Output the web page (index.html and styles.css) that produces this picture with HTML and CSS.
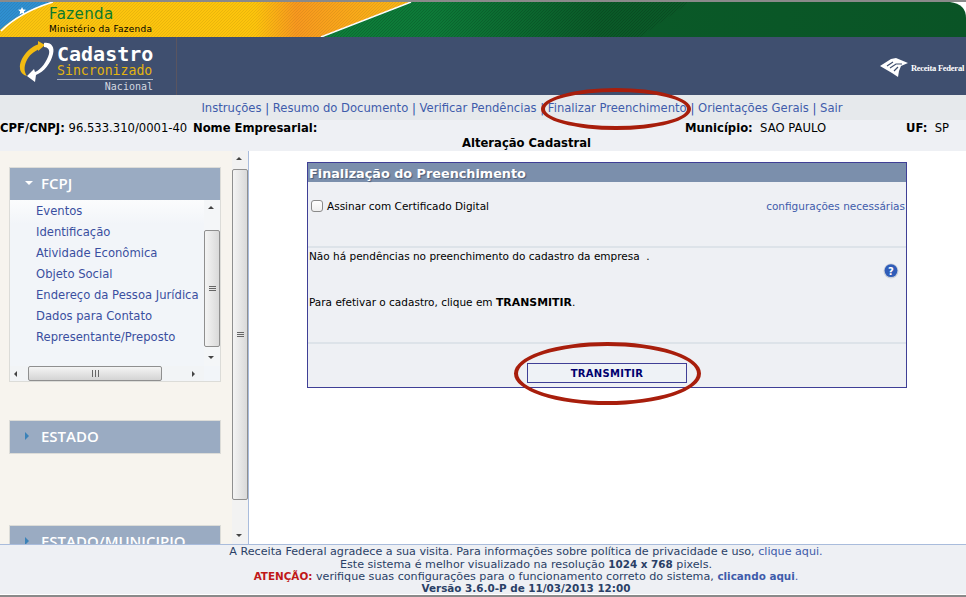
FILE: index.html
```html
<!DOCTYPE html>
<html>
<head>
<title>Cadastro Sincronizado Nacional</title>
<meta charset="utf-8">
<link rel="stylesheet" href="styles.css">
</head>
<body>
<div class="page">

<header class="banner">
  <svg class="banner-art" width="966" height="35" viewBox="0 0 966 35">
    <defs>
      <linearGradient id="yel" x1="0" x2="1" y1="0" y2="0">
        <stop offset="0" stop-color="#fbc40f"/>
        <stop offset=".62" stop-color="#fdc40c"/>
        <stop offset=".72" stop-color="#f7981f"/>
        <stop offset=".85" stop-color="#f9a81a"/>
        <stop offset="1" stop-color="#f8b516"/>
      </linearGradient>
      <linearGradient id="grn" x1="0" x2="1" y1="0" y2="0">
        <stop offset="0" stop-color="#0f8a3e"/>
        <stop offset=".45" stop-color="#0d7a38"/>
        <stop offset=".62" stop-color="#0a5a28"/>
        <stop offset="1" stop-color="#0a5426"/>
      </linearGradient>
      <pattern id="weave" width="3" height="3" patternUnits="userSpaceOnUse">
        <path d="M0 3L3 0" stroke="#000" stroke-opacity=".14"/>
      </pattern>
    </defs>
    <path d="M0 0H950Q966 2 966 16V35H0Z" fill="url(#grn)"/>
    <path d="M300 0H690L640 35H300Z" fill="url(#weave)"/>
    <path d="M0 0H411L321 35H0Z" fill="url(#yel)"/>
    <path d="M411 0L321 35" stroke="#fff" stroke-width="1.5"/>
    <path d="M0 0H52Q20 10 0 28Z" fill="#2f8fd0"/>
    <path d="M0 0H411L321 35H0Z" fill="url(#weave)" opacity=".5"/>
    <path d="M53 0Q20 10 1 29" stroke="#fff" stroke-width="1.5" fill="none"/>
    <path d="M22 5l1.2 2.6 2.8.2-2.1 1.8.7 2.8-2.6-1.5-2.4 1.5.6-2.8-2.1-1.8 2.8-.2z" fill="#fff"/>
  </svg>
  <div class="ministry">
    <div class="ministry-name">Fazenda</div>
    <div class="ministry-sub">Ministério da Fazenda</div>
  </div>
</header>

<div class="brand">
  <div class="brand-left">
    <svg class="swirl" width="40" height="44" viewBox="0 0 40 44">
      <path d="M22 3C12 6 2 18 3 27C3 31 6 34 10 35C7 31 7 26 9 21C12 14 17 10 23 8Z" fill="#f2bb12"/>
      <path d="M21 0L28 4L21 10Z" fill="#f2bb12"/>
      <path d="M27 2C34 1 38 6 36 13C34 22 27 31 19 34L18 41L10 35L17 28L18 31C24 29 30 20 32 13C33 9 31 6 27 6Z" fill="#fff"/>
    </svg>
    <div class="brand-text">
      <div class="brand-title">Cadastro</div>
      <div class="brand-sync">Sincronizado</div>
      <div class="brand-nat">Nacional</div>
    </div>
  </div>
  <div class="receita">
    <svg width="29" height="20" viewBox="0 0 29 20">
      <path d="M0 8L11 1L16 0L28 5L21 8L19 13L18 19L12 15Z" fill="#fff"/>
      <path d="M7 8L13 4M10 10L16 6L22 6M14 13L18 9" stroke="#3f4f6f" stroke-width="1.2" fill="none"/>
    </svg>
    <span>Receita Federal</span>
  </div>
</div>

<nav class="nav">
  <a href="#">Instruções</a> | <a href="#">Resumo do Documento</a> | <a href="#">Verificar Pendências</a> | <a href="#">Finalizar Preenchimento</a> | <a href="#">Orientações Gerais</a> | <a href="#">Sair</a>
</nav>

<section class="info">
  <div class="info-row">
    <div class="info-main"><b>CPF/CNPJ:</b> 96.533.310/0001-40 <b class="gap">Nome Empresarial:</b></div>
    <div class="info-city"><b>Município:</b>&nbsp; SAO PAULO</div>
    <div><b>UF:</b>&nbsp; SP</div>
  </div>
  <div class="info-title">Alteração Cadastral</div>
</section>

<div class="frames">
  <aside class="side">
    <div class="acc-head acc-open"><i class="tri-down"></i>FCPJ</div>
    <div class="acc-body">
      <ul class="acc-list">
        <li><a href="#">Eventos</a></li>
        <li><a href="#">Identificação</a></li>
        <li><a href="#">Atividade Econômica</a></li>
        <li><a href="#">Objeto Social</a></li>
        <li><a href="#">Endereço da Pessoa Jurídica</a></li>
        <li><a href="#">Dados para Contato</a></li>
        <li><a href="#">Representante/Preposto</a></li>
      </ul>
      <div class="sb sb-v sb-inner">
        <i class="arr arr-up"></i>
        <div class="sb-track"><div class="thumb thumb-inner"><em class="grip"></em></div></div>
        <i class="arr arr-down"></i>
      </div>
      <div class="sb-h">
        <i class="arr arr-left"></i>
        <div class="thumb-h"><em class="grip-h"></em></div>
        <i class="arr arr-right"></i>
      </div>
    </div>
    <div class="acc-head acc-two"><i class="tri-right"></i>ESTADO</div>
    <div class="acc-head acc-three"><i class="tri-right"></i>ESTADO/MUNICIPIO</div>
  </aside>

  <div class="sb sb-v sb-outer">
    <i class="arr arr-up"></i>
    <div class="sb-track"><div class="thumb thumb-outer"><em class="grip"></em></div></div>
    <i class="arr arr-down"></i>
  </div>

  <main class="main">
    <div class="panel">
      <h1 class="panel-title">Finalização do Preenchimento</h1>
      <div class="panel-cert">
        <label class="cert"><span class="check"></span>Assinar com Certificado Digital</label>
        <a href="#">configurações necessárias</a>
      </div>
      <div class="panel-msg">
        <p>Não há pendências no preenchimento do cadastro da empresa &nbsp;.</p>
        <svg class="help" width="16" height="16" viewBox="0 0 16 16">
          <circle cx="8" cy="8" r="7.5" fill="#c9cfd8"/>
          <circle cx="8" cy="7.6" r="6.4" fill="#2f5cb8"/>
          <text x="8" y="11.5" text-anchor="middle" class="help-q">?</text>
        </svg>
        <p class="msg-two">Para efetivar o cadastro, clique em <b>TRANSMITIR</b>.</p>
      </div>
      <div class="panel-foot">
        <button class="send">TRANSMITIR</button>
      </div>
    </div>
  </main>
</div>

<footer class="foot">
  <div>A Receita Federal agradece a sua visita. Para informações sobre política de privacidade e uso, <a href="#">clique aqui.</a></div>
  <div>Este sistema é melhor visualizado na resolução <b>1024 x 768</b> pixels.</div>
  <div><b class="warn">ATENÇÃO:</b> verifique suas configurações para o funcionamento correto do sistema, <a href="#"><b>clicando aqui</b>.</a></div>
  <div><b>Versão 3.6.0-P de 11/03/2013 12:00</b></div>
</footer>
<div class="bottom-line"></div>

<div class="ring ring-nav"></div>
<div class="ring ring-send"></div>

</div>
</body>
</html>
```

FILE: styles.css
```css
* {
   box-sizing: border-box;}

body {
   background: #fff;
   color: #000;
   font-family: 'DejaVu Sans', sans-serif;
   font-size: 11px;
   margin: 0;
   overflow: hidden;}

a {
   color: #3150a8;
   text-decoration: none;}

.page {
   border-top: 2px solid #8a8a8a;
   height: 597px;
   overflow: hidden;
   position: relative;
   width: 966px;}

/* top banner */
.banner {
   height: 35px;
   position: relative;}

.banner-art {
   display: block;
   left: 0;
   position: absolute;
   top: 0;}

.ministry {
   padding: 5px 0 0 49px;
   position: relative;}

.ministry-name {
   color: #0a7a2e;
   font-size: 15px;
   letter-spacing: .4px;
   line-height: 15px;}

.ministry-sub {
   font-size: 9px;
   letter-spacing: .25px;
   line-height: 12px;
   padding-top: 1px;}

/* blue bar */
.brand {
   align-items: center;
   background: #3f4f6f;
   display: flex;
   height: 58px;
   justify-content: space-between;}

.brand-left {
   border-right: 1px solid #5a5560;
   display: flex;
   height: 58px;
   padding: 8px 0 0 17px;
   width: 177px;}

.swirl {
   flex: none;
   margin-top: -4px;}

.brand-text {
   font-family: 'DejaVu Sans Mono', monospace;
   width: 96px;}

.brand-title {
   color: #fff;
   font-size: 20px;
   font-weight: bold;
   height: 19px;
   line-height: 19px;}

.brand-sync {
   border-bottom: 1px solid #aab2c2;
   color: #e3b40f;
   font-size: 13.2px;
   height: 16px;
   line-height: 14px;}

.brand-nat {
   color: #d4d8e0;
   font-size: 10px;
   line-height: 13px;
   text-align: right;}

.receita {
   align-items: center;
   color: #fff;
   display: flex;
   font-family: 'Liberation Serif', serif;
   font-size: 8.5px;
   font-weight: bold;
   gap: 2px;
   letter-spacing: -.25px;
   padding: 3px 2px 0 0;
   white-space: nowrap;}

/* nav */
.nav {
   background: #e6e9ec;
   color: #3150a8;
   font-size: 11.6px;
   height: 25px;
   line-height: 27px;
   padding-left: 78px;
   text-align: center;}

.nav a {
   color: #3f5cab;}

/* cadastro info */
.info {
   background: #eef0f4;
   font-size: 11.6px;
   height: 31px;
   line-height: 15px;
   padding-top: 1px;}

.info-row {
   display: flex;
   height: 15px;}

.info-main {
   width: 685px;}

.gap {
   margin-left: 2px;}

.info-city {
   width: 221px;}

.info-title {
   font-weight: bold;
   margin-left: 462px;}

/* frames */
.frames {
   border-bottom: 1px solid #a9bcdc;
   display: flex;
   height: 394px;}

.side {
   background: #f7f4ee;
   flex: none;
   height: 393px;
   overflow: hidden;
   padding: 16px 11px 0 9px;
   width: 232px;}

.acc-head {
   align-items: center;
   background: #9aabc2;
   border: 1px solid #dcdcd8;
   color: #fff;
   display: flex;
   font-family: 'Open Sans', sans-serif;
   font-size: 15px;
   font-weight: 600;
   height: 34px;
   padding: 0 0 2px 15px;}

.acc-open {
   border-bottom: none;
   height: 33px;}

.acc-two {
   margin-top: 38px;}

.acc-three {
   margin-top: 71px;}

.tri-down {
   border-left: 4px solid transparent;
   border-right: 4px solid transparent;
   border-top: 4px solid #fff;
   margin-right: 8px;}

.tri-right {
   border-bottom: 4px solid transparent;
   border-left: 4px solid #3b82b8;
   border-top: 4px solid transparent;
   margin: 0 12px 0 0;}

.acc-body {
   background: linear-gradient(#fbfcfd, #f2f5f9 24px);
   border: 1px solid #dcdcd8;
   border-top: none;
   height: 182px;
   position: relative;
   width: 212px;}

.acc-list {
   font-size: 11.6px;
   list-style: none;
   margin: 0;
   padding: 1px 0 0 26px;}

.acc-list li {
   height: 21px;
   line-height: 21px;
   white-space: nowrap;}

.acc-list a {
   color: #3a4fa0;}

/* scrollbars */
.sb {
   background: #f2f2f2;
   display: flex;
   flex-direction: column;}

.sb-outer {
   border-right: 1px solid #a9bcdc;
   flex: none;
   height: 393px;
   width: 17px;}

.sb-inner {
   background: #f4f6f8;
   height: 166px;
   position: absolute;
   right: 0;
   top: 0;
   width: 16px;}

.sb-track {
   flex: 1;}

.thumb {
   align-items: center;
   background: linear-gradient(90deg, #f4f4f4, #d9d9d9);
   border: 1px solid #8f8f8f;
   border-radius: 2px;
   display: flex;
   justify-content: center;}

.thumb-outer {
   height: 331px;
   margin-top: 2px;}

.thumb-inner {
   height: 117px;
   margin-top: 14px;}

.grip {
   border-bottom: 1px solid #666;
   border-top: 1px solid #666;
   height: 5px;
   position: relative;
   width: 7px;}

.grip:after {
   border-top: 1px solid #666;
   content: '';
   left: 0;
   position: absolute;
   right: 0;
   top: 1px;}

.arr {
   display: block;
   flex: none;
   height: 16px;
   position: relative;
   width: 15px;}

.arr:after {
   content: '';
   left: 4px;
   position: absolute;
   top: 6px;}

.arr-up:after {
   border-bottom: 3px solid #444;
   border-left: 3px solid transparent;
   border-right: 3px solid transparent;}

.arr-down:after {
   border-left: 3px solid transparent;
   border-right: 3px solid transparent;
   border-top: 3px solid #444;}

.arr-left:after {
   border-bottom: 3px solid transparent;
   border-right: 3px solid #444;
   border-top: 3px solid transparent;
   top: 4px;}

.arr-right:after {
   border-bottom: 3px solid transparent;
   border-left: 3px solid #444;
   border-top: 3px solid transparent;
   left: 6px;
   top: 4px;}

.sb-h {
   align-items: center;
   background: #f2f4f6;
   bottom: 0;
   display: flex;
   height: 15px;
   left: 0;
   position: absolute;
   width: 194px;}

.sb-h .arr {
   height: 14px;
   width: 18px;}

.thumb-h {
   align-items: center;
   background: linear-gradient(#f4f4f4, #d4d4d4);
   border: 1px solid #8f8f8f;
   border-radius: 2px;
   display: flex;
   height: 15px;
   justify-content: center;
   margin-right: 24px;
   width: 136px;}

.grip-h {
   border-left: 1px solid #666;
   border-right: 1px solid #666;
   height: 7px;
   position: relative;
   width: 7px;}

.grip-h:after {
   border-left: 1px solid #666;
   content: '';
   height: 7px;
   left: 2px;
   position: absolute;}

/* main panel */
.main {
   flex: 1;
   padding: 11px 0 0 58px;}

.panel {
   background: #eef0f4;
   border: 1px solid #3f3f96;
   font-size: 10.5px;
   height: 226px;
   width: 600px;}

.panel-title {
   background: #7b8fac;
   color: #fff;
   font-size: 12.8px;
   font-weight: bold;
   height: 19px;
   line-height: 21px;
   margin: 0;
   padding-left: 1px;
   text-shadow: 1px 1px 1px #4a5a75;}

.panel-cert {
   align-items: center;
   border-bottom: 2px solid #dde3e9;
   display: flex;
   height: 66px;
   justify-content: space-between;
   padding: 0 1px 16px 3px;}

.panel-cert a {
   color: #3f5cab;}

.cert {
   align-items: center;
   display: flex;}

.check {
   background: linear-gradient(#fff, #f0f0f0);
   border: 1px solid #8a8a8a;
   border-radius: 3px;
   height: 12px;
   margin-right: 4px;
   width: 12px;}

.panel-msg {
   border-bottom: 2px solid #dde3e9;
   height: 96px;
   padding: 1px 0 0 1px;
   position: relative;}

.panel-msg p {
   line-height: 15px;
   margin: 0;}

.panel-msg b {
   font-size: 10.9px;}

.msg-two {
   padding-top: 31px;}

.help {
   position: absolute;
   right: 7px;
   top: 15px;}

.help-q {
   fill: #fff;
   font-family: 'DejaVu Sans', sans-serif;
   font-size: 10px;
   font-weight: bold;}

.panel-foot {
   display: flex;
   justify-content: center;
   padding-top: 19px;}

.send {
   background: #eef2f6;
   border: 1px solid #3f3f96;
   color: #00006e;
   font-family: 'DejaVu Sans', sans-serif;
   font-size: 10px;
   font-weight: bold;
   height: 20px;
   letter-spacing: .3px;
   padding: 0;
   width: 160px;}

/* footer */
.foot {
   background: #eef0f4;
   color: #2a3f66;
   font-size: 11.15px;
   height: 49px;
   line-height: 12px;
   padding: 1px 0 0 86px;
   text-align: center;}

.foot div {
   height: 12px;}

.foot b {
   font-size: 10.4px;}

.foot a {
   color: #3f5cab;}

.warn {
   color: #c01818;}

.bottom-line {
   border-top: 2px solid #8a8a8a;
   margin-top: 1px;}

/* red marks drawn over the screenshot */
.ring {
   border: 4px solid #a81e0c;
   border-radius: 50%;
   position: absolute;}

.ring-nav {
   height: 42px;
   left: 541px;
   top: 86px;
   width: 150px;}

.ring-send {
   height: 63px;
   left: 514px;
   top: 340px;
   width: 187px;}
```
